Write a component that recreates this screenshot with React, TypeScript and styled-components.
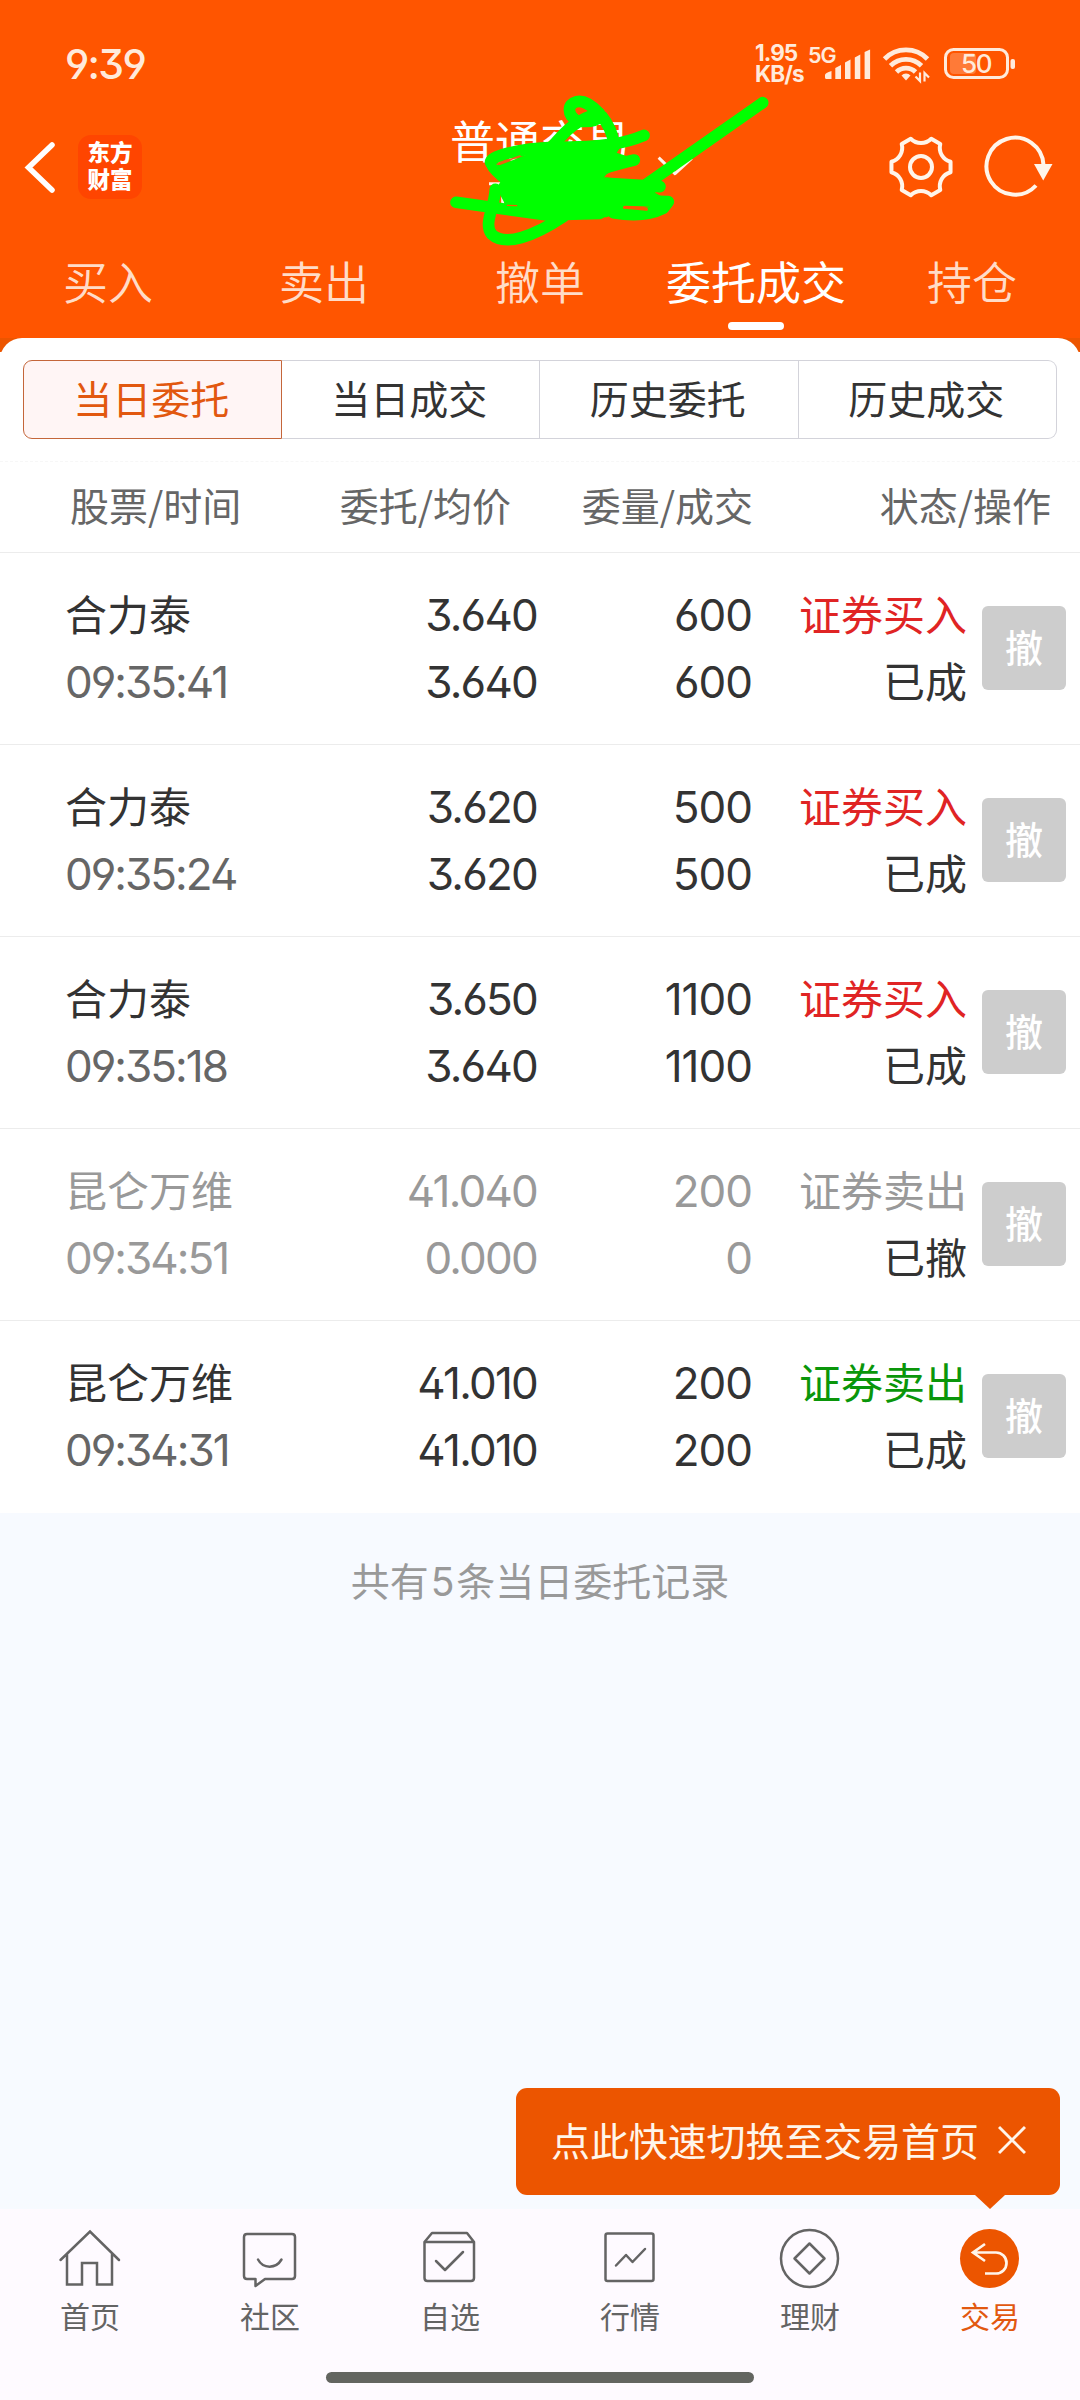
import React from "react";
import styled, { createGlobalStyle } from "styled-components";

const cjk = `"Noto Sans CJK SC", sans-serif`;
const latin = `Inter, "Noto Sans CJK SC", sans-serif`;

const GlobalStyle = createGlobalStyle`
  * { box-sizing: border-box; }
  body { margin: 0; background: #f7faff; font-family: ${cjk}; }
  button { border: 0; padding: 0; margin: 0; background: none; font: inherit; color: inherit; }
  svg { display: block; flex: none; }
`;

const Screen = styled.div`
  position: relative;
  width: 1080px;
  height: 2400px;
  display: flex;
  flex-direction: column;
  overflow: hidden;
  background: #f7faff;
`;

const Header = styled.header`
  height: 338px;
  flex: none;
  display: flex;
  flex-direction: column;
  background: #ff5500;
  color: #fff;
`;

const StatusBar = styled.div`
  height: 112px;
  padding: 16px 64px 0 65px;
  display: flex;
  align-items: center;
  justify-content: space-between;
  color: #ffeadb;
  font-family: ${latin};
`;

const Clock = styled.div`
  font-size: 41px;
  font-weight: 500;
  letter-spacing: -1.7px;
  line-height: 1;
  font-feature-settings: "ss01", "cv03", "cv04", "cv09";
`;

const StatusIcons = styled.div`
  display: flex;
  align-items: center;
`;

const Speed = styled.div`
  width: 53px;
  display: flex;
  flex-direction: column;
  font-size: 22.5px;
  line-height: 20.5px;
  font-weight: 700;
  letter-spacing: -0.9px;
  padding-bottom: 1px;
`;

const Network = styled.div`
  width: 13px;
  height: 40px;
  font-size: 21.5px;
  line-height: 22px;
  font-weight: 600;
  letter-spacing: -1px;
`;

const TitleBar = styled.div`
  height: 118px;
  padding: 0 27px 0 24px;
  display: grid;
  grid-template-columns: 300px 432px 1fr;
  justify-content: space-between;
  align-items: center;
`;

const TitleLeft = styled.div`
  display: flex;
  align-items: center;
  gap: 22px;
  padding-bottom: 8px;
`;

const Logo = styled.div`
  width: 64px;
  height: 64px;
  border-radius: 13px;
  background: #ff4500;
  font-size: 22.5px;
  line-height: 27px;
  font-weight: 900;
  text-align: center;
  padding-top: 3px;
`;

const Title = styled.h1`
  position: relative;
  margin: 0;
  padding-bottom: 62px;
  text-align: center;
  font-size: 45px;
  line-height: 56px;
  font-weight: 400;
`;

const Scribble = styled.svg`
  position: absolute;
  left: 96px;
  top: -32px;
`;

const TitleRight = styled.div`
  display: flex;
  align-items: center;
  justify-content: flex-end;
  gap: 28px;
  padding-bottom: 8px;
`;

const MainTabs = styled.nav`
  height: 108px;
  display: grid;
  grid-template-columns: repeat(5, 1fr);
`;

const MainTab = styled.button<{ $active?: boolean }>`
  display: flex;
  flex-direction: column;
  align-items: center;
  padding-top: 20px;
  font-size: 45px;
  line-height: 62px;
  font-weight: ${(p) => (p.$active ? 400 : 350)};
  color: ${(p) => (p.$active ? "#fff" : "#ffdcc8")};
  &::after {
    content: "";
    width: 56px;
    height: 8px;
    margin-top: 10px;
    border-radius: 4px;
    background: ${(p) => (p.$active ? "#fff" : "transparent")};
  }
`;

const CardTop = styled.div`
  height: 14px;
  flex: none;
  overflow: hidden;
  background: #ec5500;
  &::before {
    content: "";
    display: block;
    height: 60px;
    border-radius: 22px;
    background: #fff;
  }
`;

const Panel = styled.main`
  flex: none;
  background: #fff;
`;

const Segments = styled.div`
  display: grid;
  grid-template-columns: repeat(4, 1fr);
  height: 110px;
  padding: 8px 23px 23px 23px;
  border-bottom: 1px dashed #f7f7f7;
`;

const Segment = styled.button<{ $active?: boolean }>`
  border: 1px solid ${(p) => (p.$active ? "#c4663a" : "#d3d3da")};
  border-left-width: ${(p) => (p.$active ? 1 : 0)}px;
  background: ${(p) => (p.$active ? "#fff5f5" : "#fff")};
  color: ${(p) => (p.$active ? "#e2580f" : "#333")};
  font-size: 39px;
  line-height: 72px;
  padding: 0 2px 5px 0;
  &:first-child { border-radius: 9px 0 0 9px; }
  &:last-child { border-radius: 0 9px 9px 0; }
`;

const HeadRow = styled.div`
  display: grid;
  grid-template-columns: 511px 242px 298px;
  height: 91px;
  align-items: center;
  border-bottom: 1px solid #ececec;
  font-size: 39px;
  line-height: 58px;
  padding-bottom: 6px;
  color: #666;
  text-align: right;
`;

const HeadPair = styled.div`
  display: flex;
  justify-content: space-between;
  padding-left: 70px;
`;

const Row = styled.div`
  display: grid;
  grid-template-columns: 537px 215px 215px 1fr;
  height: 192px;
  align-items: center;
  border-bottom: 1px solid #ececec;
  font-family: ${latin};
  font-size: 42px;
  line-height: 67px;
  &:last-child { border-bottom-color: transparent; }
`;

const NamePrice = styled.div`
  display: grid;
  grid-template-columns: 1fr auto;
  padding-left: 65px;
`;

const Cell = styled.div<{ $align?: string }>`
  display: flex;
  flex-direction: column;
  text-align: ${(p) => p.$align ?? "right"};
`;

const Word = styled.span<{ $color: string }>`
  height: 67px;
  font-family: ${cjk};
  line-height: 61px;
  color: ${(p) => p.$color};
`;

const Num = styled.span<{ $color: string; $spacing?: number }>`
  height: 67px;
  font-size: 44px;
  letter-spacing: ${(p) => p.$spacing ?? -2}px;
  font-feature-settings: "ss01", "cv03", "cv04", "cv09";
  color: ${(p) => p.$color};
`;

const CancelButton = styled.button`
  width: 84px;
  height: 84px;
  margin-left: 15px;
  margin-bottom: 1px;
  padding-bottom: 5px;
  border-radius: 6px;
  background: #cdcdcd;
  color: #fff;
  font-family: ${cjk};
  font-size: 38px;
  font-weight: 500;
  line-height: 78px;
`;

const Summary = styled.p`
  flex: 1;
  margin: 0;
  padding-top: 37px;
  text-align: center;
  font-size: 39px;
  line-height: 58px;
  color: #999;
`;

const Count = styled.span`
  font-family: ${latin};
  margin: 0 2px;
`;

const Toast = styled.div`
  position: absolute;
  left: 516px;
  top: 2088px;
  width: 544px;
  height: 107px;
  padding: 0 34px 4px 35px;
  display: flex;
  align-items: center;
  justify-content: space-between;
  border-radius: 11px;
  background: #ec5500;
  color: #fff5ea;
  font-size: 39px;
  line-height: 1;
  white-space: nowrap;
  &::after {
    content: "";
    position: absolute;
    left: 459px;
    top: 107px;
    border: 15px solid transparent;
    border-top: 14px solid #ec5500;
    border-bottom: 0;
  }
`;

const ToastText = styled.span`
  letter-spacing: -0.1px;
  padding-bottom: 1px;
`;

const TabBar = styled.footer`
  flex: none;
  height: 191px;
  display: flex;
  flex-direction: column;
  align-items: center;
  background: #fefaff;
`;

const TabItems = styled.nav`
  width: 100%;
  height: 163px;
  display: grid;
  grid-template-columns: repeat(6, 1fr);
`;

const TabItem = styled.button<{ $active?: boolean }>`
  display: flex;
  flex-direction: column;
  align-items: center;
  padding-top: 17px;
  font-size: 30px;
  line-height: 44px;
  color: ${(p) => (p.$active ? "#e2580f" : "#646464")};
  svg { margin-bottom: 3px; }
`;

const HomeBar = styled.div`
  width: 428px;
  height: 11px;
  border-radius: 6px;
  background: #636560;
`;

const orders = [
  { name: "合力泰", time: "09:35:41", price: "3.640", avg: "3.640", qty: "600", done: "600", side: "证券买入", state: "已成" },
  { name: "合力泰", time: "09:35:24", price: "3.620", avg: "3.620", qty: "500", done: "500", side: "证券买入", state: "已成" },
  { name: "合力泰", time: "09:35:18", price: "3.650", avg: "3.640", qty: "1100", done: "1100", side: "证券买入", state: "已成" },
  { name: "昆仑万维", time: "09:34:51", price: "41.040", avg: "0.000", qty: "200", done: "0", side: "证券卖出", state: "已撤" },
  { name: "昆仑万维", time: "09:34:31", price: "41.010", avg: "41.010", qty: "200", done: "200", side: "证券卖出", state: "已成" },
];

const GearIcon = () => {
  const pt = (deg: number, r: number) => {
    const a = (deg * Math.PI) / 180;
    return `${(32 + r * Math.cos(a)).toFixed(2)} ${(32 + r * Math.sin(a)).toFixed(2)}`;
  };
  let d = "";
  for (let k = 0; k < 6; k++) {
    const c = k * 60;
    d += `${k ? "L" : "M"}${pt(c - 10, 30)} L${pt(c + 10, 30)} C${pt(c + 19, 22.9)} ${pt(c + 41, 22.9)} ${pt(c + 50, 30)} `;
  }
  return (
    <svg width="64" height="64" viewBox="0 0 64 64" fill="none" stroke="#fff5ea" strokeWidth="4" strokeLinejoin="round">
      <path d={d + "Z"} />
      <circle cx="32" cy="32" r="11" />
    </svg>
  );
};

const RefreshIcon = () => (
  <svg width="72" height="64" viewBox="0 0 72 64" fill="none" stroke="#fff5ea" strokeWidth="4">
    <path d="M55 50.500A28.500 28.500 0 1 1 62.500 30" />
    <path d="M53 29H71.500L62.200 45.500Z" fill="#fff5ea" stroke="none" />
  </svg>
);

const StatusGlyphs = () => (
  <svg width="195" height="44" viewBox="821 42 195 44" fill="#ffeadb">
    <path d="M825 75q0-2 6.500-4v8h-5q-1.500 0-1.500-1.500zM835.300 68l5.700-3v14h-5.700zM845 62.500l5.500-3v19.500h-5.500zM854.800 57.500l5.500-3v24.500h-5.500zM864.600 52l5.500-2.500v29.500h-5.500z" />
    <g fill="none" stroke="#ffeadb" strokeWidth="4.800">
      <path d="M884.500 59a30 30 0 0 1 43 0" />
      <path d="M890.500 65.700a22 22 0 0 1 31 0" />
      <path d="M896.500 72a13.500 13.500 0 0 1 19 0" />
    </g>
    <path d="M901.500 75.500a6 6 0 0 1 9 0l-4.500 5z" />
    <path d="M920 72.500v8.500l-4.500-4.500M924.500 81.500v-8.500l4.500 4.500" fill="none" stroke="#ffeadb" strokeWidth="2.200" />
    <rect x="945.500" y="49.500" width="62" height="28" rx="8" fill="none" stroke="#ffeadb" strokeWidth="3" />
    <rect x="950" y="53" width="26" height="21" rx="4" opacity=".25" />
    <rect x="1010.500" y="59" width="4.500" height="10" rx="2" />
    <text x="976" y="73" fontFamily="Inter, sans-serif" fontSize="26" fontWeight="500" letterSpacing="-1.500" textAnchor="middle">50</text>
  </svg>
);

const tabIcons = [
  <svg key="home" width="64" height="64" viewBox="58 2226 64 64" fill="none" stroke="#646464" strokeWidth="2.5" strokeLinecap="round">
    <path d="M60.500 2260L90 2231.500L119 2260M67 2254.500V2284.500H82V2263H97V2284.500H112V2254.500" />
  </svg>,
  <svg key="chat" width="64" height="64" viewBox="238 2226 64 64" fill="none" stroke="#646464" strokeWidth="2.5" strokeLinecap="round" strokeLinejoin="round">
    <path d="M247 2234H292Q295 2234 295 2237V2276Q295 2279 292 2279H265L255.500 2286V2279H247Q244 2279 244 2276V2237Q244 2234 247 2234Z" />
    <path d="M258 2259.500C263 2269 276 2269 281.500 2259.500" />
  </svg>,
  <svg key="picks" width="64" height="64" viewBox="418 2226 64 64" fill="none" stroke="#646464" strokeWidth="2.5" strokeLinecap="round" strokeLinejoin="round">
    <path d="M424.500 2242L432 2233H467L474 2242V2278Q474 2281 471 2281H427.500Q424.500 2281 424.500 2278ZM424.500 2242H474M436 2261L445 2270L463 2252" />
  </svg>,
  <svg key="quotes" width="64" height="64" viewBox="598 2226 64 64" fill="none" stroke="#646464" strokeWidth="2.5" strokeLinecap="round" strokeLinejoin="round">
    <rect x="605.500" y="2233.500" width="48" height="47.500" rx="2" />
    <path d="M616 2265.500L626 2255L632.500 2262L645 2249" />
  </svg>,
  <svg key="wealth" width="64" height="64" viewBox="778 2226 64 64" fill="none" stroke="#646464" strokeWidth="2.5" strokeLinejoin="round">
    <circle cx="809.500" cy="2258.500" r="28.500" />
    <path d="M809.500 2243.500L824.500 2258.500L809.500 2273.500L794.500 2258.500Z" />
  </svg>,
  <svg key="trade" width="64" height="64" viewBox="958 2226 64 64" fill="none" stroke="#fff5ea" strokeWidth="2.700">
    <circle cx="989.500" cy="2258.500" r="29.500" fill="#ec5500" stroke="none" />
    <path d="M985 2244L973 2252.500L985 2261M973 2252.500H996A10.500 10.500 0 0 1 996 2273.500H985" />
  </svg>,
];

export default function App() {
  return (
    <Screen>
      <GlobalStyle />
      <Header>
        <StatusBar>
          <Clock>9:39</Clock>
          <StatusIcons>
            <Speed><span>1.95</span><span>KB/s</span></Speed>
            <Network>5G</Network>
            <StatusGlyphs />
          </StatusIcons>
        </StatusBar>
        <TitleBar>
          <TitleLeft>
            <svg width="32" height="56" viewBox="24 139 32 56" fill="none" stroke="#fff" strokeWidth="5.500" strokeLinecap="round">
              <path d="M52 145L28.500 167.500L52 190" />
            </svg>
            <Logo>东方<br />财富</Logo>
          </TitleLeft>
          <Title>
            普通交易
            <Scribble width="360" height="180" viewBox="0 0 1080 540" fill="none" strokeLinecap="round" strokeLinejoin="round">
              <path d="M716 233L765 281L815 235M207 311H250M210 350H235M248 345V375" stroke="#fff5ea" strokeWidth="9" strokeLinecap="butt" />
              <g stroke="#00ff00" strokeWidth="35">
                <path d="M1028 68L680 312" />
                <path d="M108 367L380 405L540 400" />
                <path d="M672 166C620 188 560 202 400 202C300 205 200 230 213 250Q225 275 262 300" />
                <path d="M400 196C430 160 470 115 538 100C510 70 485 62 470 65C440 72 442 105 470 122Q520 130 545 108Q575 145 582 190" />
                <path d="M643 240Q600 250 540 268M560 310L720 320M600 350Q680 365 745 365L730 385Q670 415 580 398" />
                <path d="M226 328C222 390 190 430 215 463C255 500 340 470 430 410" />
              </g>
              <path d="M232 258L300 232L400 195L610 190L590 218L640 235L560 283L552 292L665 304L720 318L705 338L740 358L735 381L614 377L606 390L560 412L370 415L250 395L255 372L230 325L250 290Z" fill="#00ff00" />
              <path d="M232 253L300 228" stroke="#e0661a" strokeWidth="5" />
              <path d="M613 382L680 388" stroke="#ff5500" strokeWidth="8" />
              <path d="M262 376L290 377" stroke="#ff5500" strokeWidth="4" />
            </Scribble>
          </Title>
          <TitleRight>
            <GearIcon />
            <RefreshIcon />
          </TitleRight>
        </TitleBar>
        <MainTabs>
          <MainTab>买入</MainTab>
          <MainTab>卖出</MainTab>
          <MainTab>撤单</MainTab>
          <MainTab $active>委托成交</MainTab>
          <MainTab>持仓</MainTab>
        </MainTabs>
      </Header>
      <CardTop />
      <Panel>
        <Segments>
          <Segment $active>当日委托</Segment>
          <Segment>当日成交</Segment>
          <Segment>历史委托</Segment>
          <Segment>历史成交</Segment>
        </Segments>
        <HeadRow>
          <HeadPair><span>股票/时间</span><span>委托/均价</span></HeadPair>
          <span>委量/成交</span>
          <span>状态/操作</span>
        </HeadRow>
        {orders.map((o) => {
          const muted = o.state === "已撤";
          const main = muted ? "#999" : "#333";
          const side = muted ? "#999" : o.side === "证券买入" ? "#e02424" : "#0a960a";
          return (
            <Row key={o.time}>
              <NamePrice>
                <Cell $align="left">
                  <Word $color={main}>{o.name}</Word>
                  <Num $color={muted ? "#999" : "#666"}>{o.time}</Num>
                </Cell>
                <Cell>
                  <Num $color={main} $spacing={-1.8}>{o.price}</Num>
                  <Num $color={main} $spacing={-1.8}>{o.avg}</Num>
                </Cell>
              </NamePrice>
              <Cell>
                <Num $color={main} $spacing={-1}>{o.qty}</Num>
                <Num $color={main} $spacing={-1}>{o.done}</Num>
              </Cell>
              <Cell>
                <Word $color={side}>{o.side}</Word>
                <Word $color="#333">{o.state}</Word>
              </Cell>
              <CancelButton>撤</CancelButton>
            </Row>
          );
        })}
      </Panel>
      <Summary>共有<Count>5</Count>条当日委托记录</Summary>
      <TabBar>
        <TabItems>
          {["首页", "社区", "自选", "行情", "理财", "交易"].map((label, i) => (
            <TabItem key={label} $active={i === 5}>
              {tabIcons[i]}
              {label}
            </TabItem>
          ))}
        </TabItems>
        <HomeBar />
      </TabBar>
      <Toast>
        <ToastText>点此快速切换至交易首页</ToastText>
        <svg width="28" height="30" viewBox="0 0 28 30" stroke="#fff5ea" strokeWidth="3">
          <path d="M1 2L27 28M27 2L1 28" />
        </svg>
      </Toast>
    </Screen>
  );
}
